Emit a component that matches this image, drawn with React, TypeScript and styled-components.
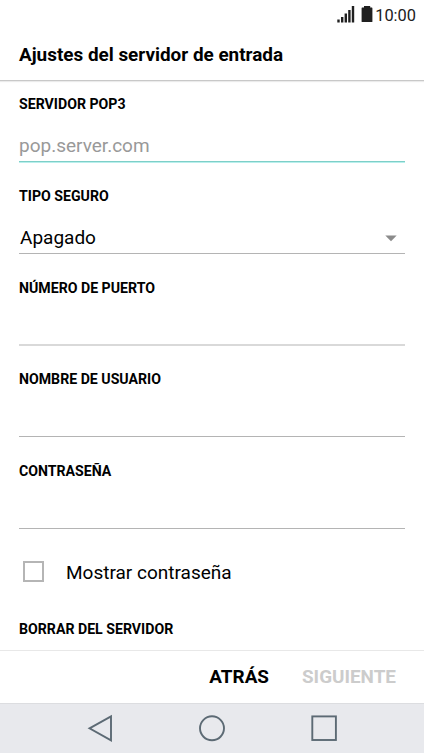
import React from "react";
import styled, { createGlobalStyle } from "styled-components";

const Global = createGlobalStyle`
  * { box-sizing: border-box; }
  body { margin: 0; background: #fff; font-family: Roboto, sans-serif; color: #000; }
`;
const Screen = styled.div`
  width: 424px; height: 753px; display: flex; flex-direction: column; background: #fff; overflow: hidden;
`;
const StatusBar = styled.div`
  height: 30px; flex: none; display: flex; justify-content: flex-end; align-items: flex-start;
  padding: 1px 8px 0 0; color: #202020;
`;
const StatusIcons = styled.svg`width: 38px; height: 20px; flex: none; display: block; margin-top: 4px;`;
const Clock = styled.span`font-size: 16.4px; line-height: 29px;`;
const Header = styled.header`
  height: 51px; flex: none; padding: 1px 0 0 19px; border-bottom: 1px solid #c8c8c8; box-shadow: 0 1px 1px rgba(0,0,0,.08);
`;
const Title = styled.h1`margin: 0; font-size: 18.9px; font-weight: 700; line-height: 48px; white-space: nowrap;`;
const Form = styled.main`height: 569px; flex: none; padding: 0 19px; overflow: hidden;`;

type LineKind = "active" | "sharp" | "soft";
const lines: Record<LineKind, string> = {
  active: "box-shadow: inset 0 -1px #b9efec, inset 0 -2px #7dcfc8;",
  sharp: "box-shadow: inset 0 -1px #b4b4b4;",
  soft: "box-shadow: inset 0 -2px #d9d9d9;",
};
const Field = styled.section<{ $height: number; $line: LineKind; $top?: number }>`
  height: ${(p) => p.$height}px;
  padding-top: ${(p) => p.$top ?? 24}px;
  ${(p) => lines[p.$line]}
`;
const Label = styled.h2`margin: 0; font-size: 14.15px; font-weight: 700; line-height: 20px; white-space: nowrap;`;
const Value = styled.div<{ $hint?: boolean }>`
  display: flex; align-items: center; justify-content: space-between; height: 20px; margin-top: 22px;
  font-size: 19px; line-height: 20px; color: ${(p) => (p.$hint ? "#999" : "#000")};
  padding: 0 8px 0 ${(p) => (p.$hint ? 0 : 1)}px;
`;
const Arrow = styled.svg`width: 12px; height: 7px; display: block;`;
const CheckRow = styled.label`
  height: 90px; display: flex; align-items: flex-start; gap: 22px; padding: 32px 0 0 4px; font-size: 19px; line-height: 24px;
`;
const Box = styled.span`width: 21px; height: 21px; border: 2px solid #b5b5b5;`;
const Actions = styled.footer`
  height: 53px; flex: none; display: flex; align-items: center; justify-content: flex-end; gap: 33px;
  padding: 0 28px 1px 0; border-top: 1px solid #e8e8e8;
`;
const Action = styled.button<{ $disabled?: boolean }>`
  border: 0; background: none; padding: 0; font: 700 18.9px Roboto, sans-serif; color: ${(p) => (p.$disabled ? "#ccc" : "#000")};
`;
const Nav = styled.nav`
  height: 50px; flex: none; display: flex; justify-content: center; align-items: flex-start; gap: 84px;
  padding-top: 10px; background: #e8e9ed; border-top: 1px solid #dcdde0;
`;
const NavIcon = styled.svg`
  width: 28px; height: 28px; display: block; fill: none; stroke: #5c6a74; stroke-width: 1.9;
`;

export default function App() {
  return (
    <>
      <Global />
      <Screen>
        <StatusBar>
          <StatusIcons viewBox="0 0 38 20" fill="#202020">
            <path d="M.3 14.5h2.4v3H.3zM4 12h2.4v5.5H4zM7.6 8.5H10v9H7.6zM11.2 5h2.4v12.5h-2.4zM14.8 1h2.4v16.5h-2.4z" />
            <path d="M27 1h6.2v1.6h1.6q.6 0 .6.6v13.2q0 .6-.6.6h-9.6q-.6 0-.6-.6V3.200q0-.6.6-.6H27z" />
          </StatusIcons>
          <Clock>10:00</Clock>
        </StatusBar>
        <Header><Title>Ajustes del servidor de entrada</Title></Header>
        <Form>
          <Field $height={82} $line="active" $top={13}>
            <Label>SERVIDOR POP3</Label>
            <Value $hint>pop.server.com</Value>
          </Field>
          <Field $height={91} $line="sharp" $top={23}>
            <Label>TIPO SEGURO</Label>
            <Value>
              Apagado
              <Arrow viewBox="0 0 12 7"><path d="M.3.5h11.4L6 6.3z" fill="#8b8b8b" /></Arrow>
            </Value>
          </Field>
          <Field $height={92} $line="soft"><Label>NÚMERO DE PUERTO</Label></Field>
          <Field $height={91} $line="sharp" $top={23.4}><Label>NOMBRE DE USUARIO</Label></Field>
          <Field $height={92} $line="sharp"><Label>CONTRASEÑA</Label></Field>
          <CheckRow><Box />Mostrar contraseña</CheckRow>
          <Label>BORRAR DEL SERVIDOR</Label>
        </Form>
        <Actions><Action>ATRÁS</Action><Action $disabled>SIGUIENTE</Action></Actions>
        <Nav>
          <NavIcon viewBox="0 0 28 28"><path d="M3.500 14.300 25 2.300v24z" /></NavIcon>
          <NavIcon viewBox="0 0 28 28"><circle cx="14" cy="14.3" r="12" /></NavIcon>
          <NavIcon viewBox="0 0 28 28"><rect x="2.3" y="2.4" width="23.6" height="23.6" /></NavIcon>
        </Nav>
      </Screen>
    </>
  );
}
